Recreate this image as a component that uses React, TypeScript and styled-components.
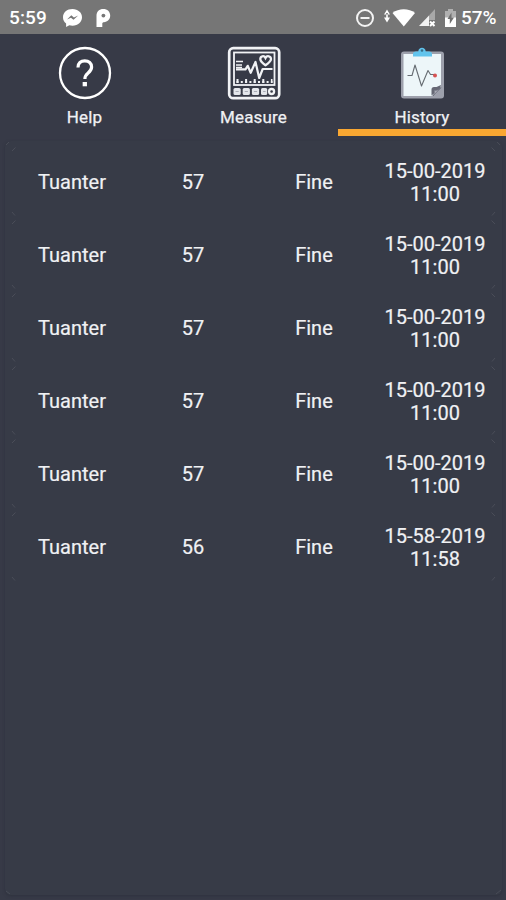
import React from "react";
import styled, { createGlobalStyle } from "styled-components";

const GlobalStyle = createGlobalStyle`
  * { box-sizing: border-box; }
  body { margin: 0; background: #373a47; }
`;

const Screen = styled.div`
  width: 506px;
  height: 900px;
  display: flex;
  flex-direction: column;
  overflow: hidden;
  background: #373a47;
  color: #f0f1f4;
  font-family: Roboto, "Liberation Sans", sans-serif;
`;

const StatusBar = styled.header`
  height: 34px;
  flex: none;
  display: flex;
  align-items: center;
  padding: 2px 7px 0 9px;
  background: #767676;
  color: #fff;
  font-size: 19px;
  line-height: 32px;
  font-weight: 500;
`;

const Clock = styled.span`
  width: 53px;
  letter-spacing: 0.1px;
`;

const StatusIcons = styled.div<{ $push?: boolean }>`
  display: flex;
  align-items: center;
  margin-left: ${(p) => (p.$push ? "auto" : "0")};
`;

const Battery = styled.span`
  width: 38px;
  margin-left: 4px;
`;

const Tabs = styled.nav`
  height: 102px;
  flex: none;
  display: grid;
  grid-template-columns: 169px 169px 168px;
`;

const Tab = styled.div<{ $active?: boolean }>`
  display: flex;
  flex-direction: column;
  align-items: center;
  padding-top: 12px;
  border-bottom: 7px solid ${(p) => (p.$active ? "#faa732" : "transparent")};
`;

const TabLabel = styled.span`
  margin-top: 5px;
  font-size: 17px;
  line-height: 24px;
  font-weight: 400;
  letter-spacing: 0.15px;
  -webkit-text-stroke: 0.25px currentColor;
`;

const PanelSlot = styled.div`
  position: relative;
  flex: 1;
  display: flex;
`;

const Panel = styled.main`
  flex: 1;
  margin: 5px 4px 5px 5px;
  padding: 5px 6px 0 6px;
  border-radius: 6px;
  background: #373b47;
  box-shadow: 0 1px 3px #2f323e;
`;

const PanelCorners = styled.svg`
  position: absolute;
  top: 5px;
  left: 5px;
  pointer-events: none;
`;

const Row = styled.div`
  position: relative;
  height: 73px;
  display: grid;
  grid-template-columns: repeat(4, 121px);
  align-items: center;
  justify-content: center;
`;

const Cell = styled.div`
  text-align: center;
  font-size: 20px;
  line-height: 23px;
  white-space: pre-line;
  -webkit-text-stroke: 0.2px currentColor;
`;

const Corners = styled.svg`
  position: absolute;
  inset: 0;
`;

const IconGap = styled.span<{ $w: number }>`
  width: ${(p) => p.$w}px;
`;

const MessengerIcon = () => (
  <svg width="21" height="20" viewBox="0 0 21 20">
    <path d="M10.5 1C5 1 1 4.500 1 9.300c0 2.700 1.100 4.700 3.100 6.200V19l3.200-1.700c1 .3 2.100.4 3.200.4 5.500 0 9.500-3.700 9.500-8.400S16 1 10.500 1Z" fill="#fff" />
    <path d="m5 11.500 4.300-4.300 2.600 2.200 4.300-1.900-4.700 4.300-2.600-2.100Z" fill="#767676" />
  </svg>
);

const PIcon = () => (
  <svg width="16" height="20" viewBox="0 0 16 20">
    <path d="M1.500 7.800C1.500 3.600 4.200 1 8.300 1c4 0 6.900 2.700 6.900 6.600s-2.800 6.600-6.300 6.600c-1 0-1.600.5-1.600 1.500V19H1.500Z" fill="#fff" />
    <circle cx="8.400" cy="7.600" r="1.900" fill="#767676" />
  </svg>
);

const DndIcon = () => (
  <svg width="20" height="20" viewBox="0 0 20 20" fill="none" stroke="#f4f4f4" strokeWidth="2">
    <circle cx="10" cy="10" r="8" />
    <path d="M5.500 10h9" />
  </svg>
);

const WifiIcon = () => (
  <svg width="32" height="20" viewBox="0 0 32 20" fill="#fff">
    <path d="M1 6.500h6L4 1.500ZM1 9.500h6l-3 5ZM3.200 5h1.600v6H3.200Z" />
    <path d="M9.500 5C15.500 0 26 0 32 5L20.800 18.500Z" />
  </svg>
);

const SignalIcon = () => (
  <svg width="18" height="20" viewBox="0 0 18 20">
    <path d="M17 1v11h-6V7.500Z" fill="#a8a8a8" />
    <path d="M11 7.500V18H1Z" fill="#f2f2f2" />
    <path d="m12 13.500 4.500 4.500m0-4.500L12 18" stroke="#fff" strokeWidth="2" />
  </svg>
);

const BatteryIcon = () => (
  <svg width="13" height="20" viewBox="0 0 13 20">
    <path d="M4 1h5v2h3v7H1V3h3Z" fill="#b0b0b0" />
    <path d="M1 9.500h11V19H1Z" fill="#fff" />
    <path d="M7.500 4.500 3.500 11h2.300v5L10 9.500H7.500Z" fill="#707070" />
  </svg>
);

const HelpIcon = () => (
  <svg width="54" height="54" viewBox="0 0 54 54" fill="none" stroke="#fff">
    <circle cx="27" cy="27" r="25" strokeWidth="2.300" />
    <path d="M20 21.500c0-4.400 2.800-6.700 6.800-6.700s6.800 2.500 6.800 6.300c0 3-1.400 4.300-3.700 6.200-2.100 1.700-3 2.800-3 5.700" strokeWidth="3.200" />
    <path d="M26.800 36v4.300" strokeWidth="4.300" />
  </svg>
);

const MeasureIcon = () => (
  <svg width="54" height="54" viewBox="0 0 54 54" fill="none" stroke="#f1f2f5">
    <rect x="2.200" y="2.200" width="50" height="50" rx="4" strokeWidth="2.700" />
    <rect x="7" y="6.500" width="40.500" height="32.500" strokeWidth="1.800" />
    <path d="M9 23.300h9.500l2.200-3.500 3 7L28.500 16l3.700 16 3.500-9h9.800" strokeWidth="2.200" strokeLinejoin="round" />
    <path d="M9 15.500h7M9 19h6M9 21.500h6" strokeWidth="1.500" />
    <path d="M38.500 19.200c-3.200-2.200-5.200-4.200-5.200-6.200 0-3.100 3.800-3.800 5.200-1.100 1.400-2.700 5.500-2 5.500 1.100 0 2-2.200 4-5.500 6.200Z" strokeWidth="2.300" />
    <path d="M9.500 36h36" strokeWidth="2.200" strokeDasharray="2 2.300" />
    <path d="M9.500 35h36" strokeWidth="4" strokeDasharray="2 6.600" />
    <g fill="#e4e6eb" stroke="none">
      <rect x="6.500" y="42" width="7.200" height="7" rx="1.500" />
      <rect x="15.700" y="42" width="7.200" height="7" rx="1.500" />
      <rect x="24.900" y="42" width="7.200" height="7" rx="1.500" />
      <rect x="34" y="42" width="6.200" height="7" rx="1.500" />
    </g>
    <path d="M8.500 45.500h3.200m6 0h3.200m6 0h3.200m6 0h2.500" stroke="#a8abb5" strokeWidth="1.200" />
    <circle cx="44.600" cy="45.500" r="2.500" strokeWidth="2.300" />
  </svg>
);

const HistoryIcon = () => (
  <svg width="54" height="54" viewBox="0 0 54 54" fill="none">
    <rect x="6" y="5.500" width="43" height="47" rx="3" fill="#9da0ac" />
    <path d="M8.500 8h37.500v33L37 50H8.500Z" fill="#edf6f9" />
    <path d="M36.500 49.500v-6q0-2.500 2.500-2.500h2.500l4.500-2-1 4Z" fill="#666875" />
    <path d="M38 50c1.500-2.500 1.500-4 1-6 2.500 1 5-.5 7-2.500Z" fill="#a9abb7" stroke="#666875" strokeWidth=".7" />
    <path d="M18 10.500V8q0-2.500 3-2.500h2.300c.2-5 7.200-5 7.400 0H34q3 0 3 2.500v2.500Z" fill="#62c4ed" />
    <circle cx="27" cy="4.500" r="1.300" fill="#376d87" />
    <path d="M12.500 29.500H17L20 19l6.500 21L33 24.500l2.500 4H39" stroke="#666c72" strokeWidth="1.100" strokeLinejoin="round" />
    <circle cx="40" cy="29.500" r="2" fill="#d65353" />
  </svg>
);

const RowCorners = () => (
  <Corners width="485" height="73" viewBox="0 0 485 73" fill="none" stroke="#4a4d58" strokeWidth="1">
    <path d="M1 5 4.500 1.500M480.500 1.500 484 5M1 66l3 3.500M481 69.500 484 66" />
  </Corners>
);

const records = [
  ...Array.from({ length: 5 }, () => ({
    name: "Tuanter",
    rate: 57,
    state: "Fine",
    date: "15-00-2019\n11:00",
  })),
  { name: "Tuanter", rate: 56, state: "Fine", date: "15-58-2019\n11:58" },
];

export default function App() {
  return (
    <Screen>
      <GlobalStyle />
      <StatusBar>
        <Clock>5:59</Clock>
        <StatusIcons>
          <MessengerIcon />
          <IconGap $w={12} />
          <PIcon />
        </StatusIcons>
        <StatusIcons $push>
          <DndIcon />
          <IconGap $w={8} />
          <WifiIcon />
          <IconGap $w={3} />
          <SignalIcon />
          <IconGap $w={8} />
          <BatteryIcon />
        </StatusIcons>
        <Battery>57%</Battery>
      </StatusBar>
      <Tabs>
        <Tab>
          <HelpIcon />
          <TabLabel>Help</TabLabel>
        </Tab>
        <Tab>
          <MeasureIcon />
          <TabLabel>Measure</TabLabel>
        </Tab>
        <Tab $active>
          <HistoryIcon />
          <TabLabel>History</TabLabel>
        </Tab>
      </Tabs>
      <PanelSlot>
        <Panel>
          {records.map((r, i) => (
            <Row key={i}>
              <RowCorners />
              <Cell>{r.name}</Cell>
              <Cell>{r.rate}</Cell>
              <Cell>{r.state}</Cell>
              <Cell>{r.date}</Cell>
            </Row>
          ))}
        </Panel>
        <PanelCorners width="497" height="754" viewBox="0 0 497 754" fill="none" stroke="#484b56">
          <path d="M1 4 4 1M492 1l3 3M1 750l4 3M491 753l5-4" />
        </PanelCorners>
      </PanelSlot>
    </Screen>
  );
}
